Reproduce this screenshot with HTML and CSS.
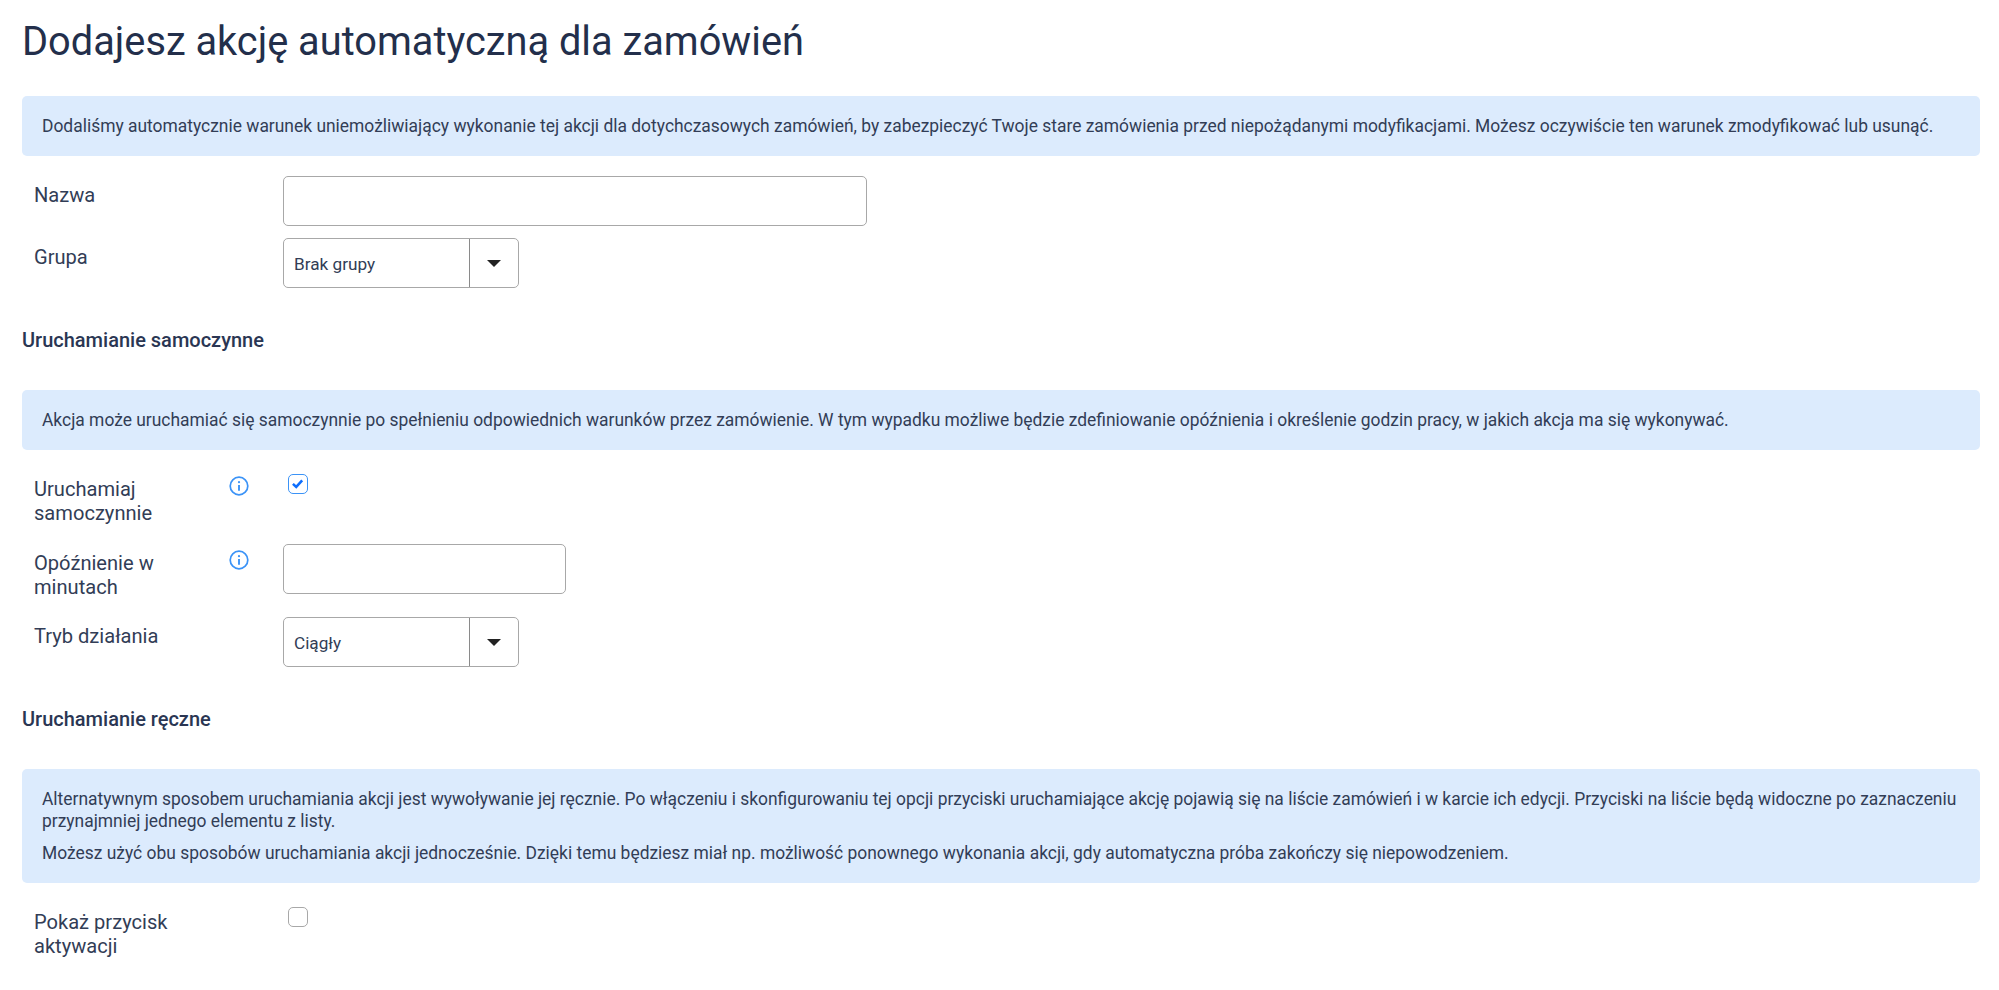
FILE: index.html
```html
<!DOCTYPE html>
<html lang="pl">
<head>
<meta charset="utf-8">
<title>Dodajesz akcję automatyczną dla zamówień</title>
<link rel="stylesheet" href="styles.css">
</head>
<body>
<main class="page">
  <h1 class="title">Dodajesz akcję automatyczną dla zamówień</h1>
  <div class="note note-first"><p>Dodaliśmy automatycznie warunek uniemożliwiający wykonanie tej akcji dla dotychczasowych zamówień, by zabezpieczyć Twoje stare zamówienia przed niepożądanymi modyfikacjami. Możesz oczywiście ten warunek zmodyfikować lub usunąć.</p></div>

  <div class="row row-name">
    <label class="label">Nazwa</label><span class="hint"></span>
    <input class="input input-wide" type="text">
  </div>
  <div class="row">
    <label class="label">Grupa</label><span class="hint"></span>
    <div class="select"><span class="select-value">Brak grupy</span><span class="select-btn"><span class="caret"></span></span></div>
  </div>

  <h2 class="section">Uruchamianie samoczynne</h2>
  <div class="note"><p>Akcja może uruchamiać się samoczynnie po spełnieniu odpowiednich warunków przez zamówienie. W tym wypadku możliwe będzie zdefiniowanie opóźnienia i określenie godzin pracy, w jakich akcja ma się wykonywać.</p></div>

  <div class="row row-check">
    <label class="label">Uruchamiaj samoczynnie</label>
    <span class="hint"><svg class="info" viewBox="0 0 20 20"><circle cx="10" cy="10" r="8.8" fill="none" stroke="#3b93f7" stroke-width="1.7"/><circle cx="10" cy="6.2" r="1.1" fill="#3b93f7"/><path d="M10 9v5.8" stroke="#3b93f7" stroke-width="1.9" fill="none"/></svg></span>
    <span class="check check-on"><svg viewBox="0 0 20 20"><path d="M4.6 10.4l3.9 3.6 7-7.6" fill="none" stroke="#0d6efd" stroke-width="3"/></svg></span>
  </div>
  <div class="row">
    <label class="label">Opóźnienie w minutach</label>
    <span class="hint"><svg class="info" viewBox="0 0 20 20"><circle cx="10" cy="10" r="8.8" fill="none" stroke="#3b93f7" stroke-width="1.7"/><circle cx="10" cy="6.2" r="1.1" fill="#3b93f7"/><path d="M10 9v5.8" stroke="#3b93f7" stroke-width="1.9" fill="none"/></svg></span>
    <input class="input input-mid" type="text">
  </div>
  <div class="row">
    <label class="label">Tryb działania</label><span class="hint"></span>
    <div class="select"><span class="select-value">Ciągły</span><span class="select-btn"><span class="caret"></span></span></div>
  </div>

  <h2 class="section">Uruchamianie ręczne</h2>
  <div class="note note-double">
    <p>Alternatywnym sposobem uruchamiania akcji jest wywoływanie jej ręcznie. Po włączeniu i skonfigurowaniu tej opcji przyciski uruchamiające akcję pojawią się na liście zamówień i w karcie ich edycji. Przyciski na liście będą widoczne po zaznaczeniu przynajmniej jednego elementu z listy.</p>
    <p>Możesz użyć obu sposobów uruchamiania akcji jednocześnie. Dzięki temu będziesz miał np. możliwość ponownego wykonania akcji, gdy automatyczna próba zakończy się niepowodzeniem.</p>
  </div>
  <div class="row row-check">
    <label class="label">Pokaż przycisk aktywacji</label><span class="hint"></span>
    <span class="check"></span>
  </div>
</main>
</body>
</html>
```
FILE: styles.css
```css
* { box-sizing: border-box; }
html, body { margin: 0; background: #fff; }
body { font-family: Roboto, "Liberation Sans", sans-serif; color: #323d56; overflow: hidden; height: 990px; }
.page { padding: 17px 19px 0 22px; }
.title { margin: 0 0 29px; font-size: 39.75px; line-height: 50px; font-weight: 400; color: #232f4b; }
.note { background: #dcebfd; border-radius: 5px; padding: 19px 20px; font-size: 17.43px; line-height: 22px; color: #323d56; }
.note p { margin: 0; }
.note-double p + p { margin-top: 10px; }
.row { display: flex; align-items: flex-start; margin-top: 12px; padding-left: 12px; }
.row-name { margin-top: 20px; }
.label { width: 196px; flex: none; font-size: 20.1px; line-height: 24px; padding: 7px 40px 6.5px 0; color: #323d56; }
.hint { width: 53px; flex: none; padding-top: 6px; display: flex; }
.info { width: 20px; height: 20px; display: block; margin-left: -1px; }
.input { display: block; height: 50px; border: 1px solid #a8a8a8; border-radius: 5px; background: #fff; padding: 0 10px; }
.input-wide { width: 584px; }
.input-mid { width: 283px; }
.select { width: 236px; height: 50px; display: flex; border: 1px solid #a8a8a8; border-radius: 5px; font-size: 17.2px; color: #323d56; }
.select-value { flex: 1; line-height: 48px; padding: 1px 0 0 10px; border-right: 1px solid #8a8a8a; }
.select-btn { width: 48px; display: flex; align-items: center; justify-content: center; padding-top: 1px; }
.caret { width: 0; height: 0; border-left: 7px solid transparent; border-right: 7px solid transparent; border-top: 7px solid #222; }
.section { margin: 39.5px 0 38px; font-size: 20px; line-height: 24px; font-weight: 500; color: #2a3653; }
.check { width: 20px; height: 20px; margin: 4px 0 0 5px; border: 1px solid #a8a8a8; border-radius: 5px; display: block; background: #fff; }
.check svg { display: block; width: 17px; height: 17px; }
.check-on { border-color: #3b93f7; border-width: 1.5px; }
.row-check { margin-top: 20.5px; }
```
